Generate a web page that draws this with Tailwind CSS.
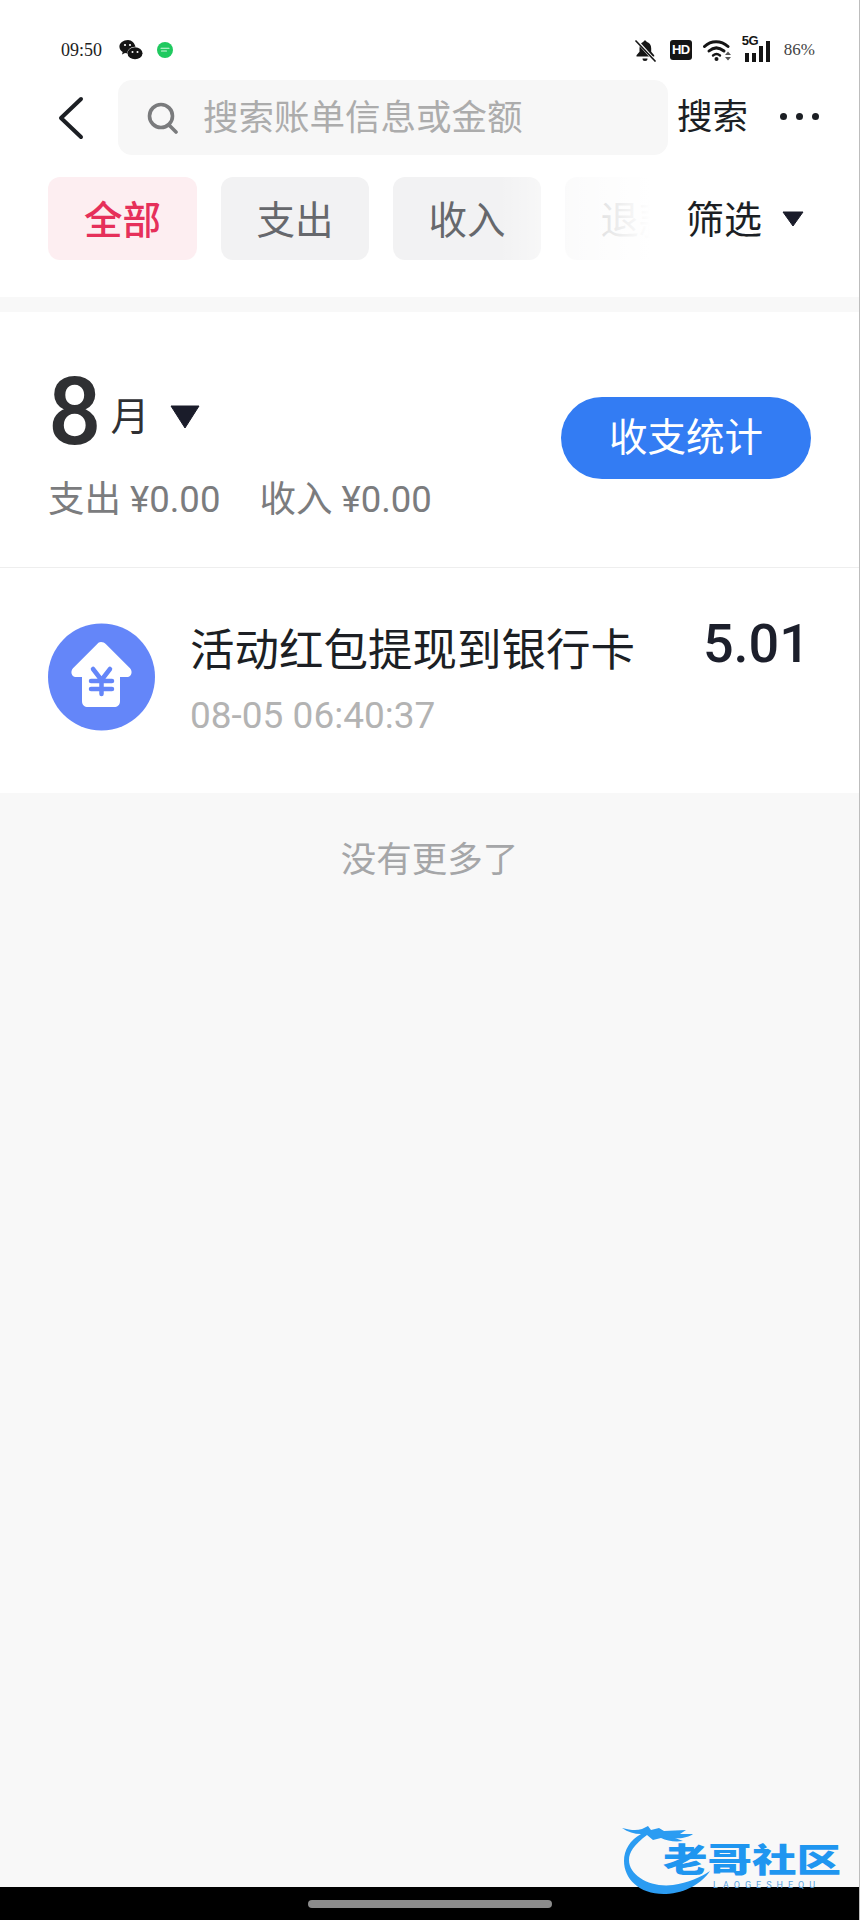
<!DOCTYPE html>
<html lang="zh">
<head>
  <meta charset="UTF-8" />
  <meta name="viewport" content="width=device-width, initial-scale=1.0" />
  <script src="https://cdn.jsdelivr.net/npm/@tailwindcss/browser@4"></script>
  <title>账单</title>
</head>
<body class="bg-white font-['Roboto','Noto_Sans_CJK_SC',sans-serif]">
  <div class="relative w-[860px] h-[1920px] flex flex-col bg-[#f8f8f8] overflow-hidden border-r border-[#bdbdbd]">

    <!-- Header -->
    <div class="bg-white h-[297px] shrink-0">
      <!-- Status bar -->
      <div class="h-[80px] flex items-center justify-between pl-[61px] pr-[44px] pt-[20px]">
        <div class="flex items-center">
          <span class="font-['Liberation_Serif',serif] text-[18px] text-[#222]">09:50</span>
          <svg class="ml-[17px]" width="24" height="20" viewBox="0 0 24 20" fill="#151515">
            <path d="M9 0C4.200 0 0.400 3 0.400 6.700c0 2.200 1.300 4 3.300 5.200L3 14.400l3-1.500c.8.200 1.600.3 2.400.3 0-3.400 3.200-6.400 7.500-6.400h.6C15.700 3 12.700 0 9 0z"/>
            <ellipse cx="16" cy="13.300" rx="7.500" ry="6"/>
            <circle cx="6" cy="5" r="1.100" fill="#fff"/><circle cx="11" cy="5" r="1.100" fill="#fff"/>
            <circle cx="13.500" cy="12" r="1" fill="#fff"/><circle cx="18.500" cy="12" r="1" fill="#fff"/>
          </svg>
          <svg class="ml-[14px]" width="16" height="16" viewBox="0 0 16 16">
            <circle cx="8" cy="8" r="8" fill="#1fc95f"/>
            <path d="M4 6.300h8M4.500 9h5" stroke="#d6f7e2" stroke-width="1.100" stroke-linecap="round"/>
          </svg>
        </div>
        <div class="flex items-center">
          <!-- muted bell -->
          <svg width="24" height="24" viewBox="0 0 24 24" fill="#151515">
            <path d="M11 2.500c.8 0 1.500.6 1.500 1.300 3 .8 4.700 3.300 4.700 6.400v3.500l3 3.600v1.200H2.500v-1.200l3-3.600v-3.500c0-3.100 1.500-5.600 4-6.400 0-.7.700-1.300 1.500-1.300z"/>
            <path d="M8.500 20.500h5a2.500 2.500 0 0 1-5 0z"/>
            <path d="M2 2l19 21" stroke="#fff" stroke-width="3"/>
            <path d="M1.500 2.500l20 21" stroke="#151515" stroke-width="1.600"/>
          </svg>
          <div class="ml-[12px] w-[22px] h-[20px] rounded-[3px] bg-[#151515] text-white text-[13px] leading-[20px] font-bold text-center font-['Liberation_Sans',sans-serif] tracking-[-0.5px]">HD</div>
          <svg class="ml-[11px]" width="30" height="22" viewBox="0 0 30 22" fill="none">
            <path d="M1.500 7.500C8 1 18 1 25 7.500" stroke="#151515" stroke-width="3" stroke-linecap="round"/>
            <path d="M6 12c4.500-4 10-4 15 0" stroke="#151515" stroke-width="3" stroke-linecap="round"/>
            <path d="M10 16.500c2.500-2 4.500-2 7 0" stroke="#151515" stroke-width="2.400" stroke-linecap="round"/>
            <circle cx="13.500" cy="20" r="2" fill="#151515"/>
            <path d="M25 12.500l3 3.500h-6zM25 21.500l3-3.500h-6z" fill="#555"/>
          </svg>
          <div class="ml-[9px] relative w-[33px] h-[24px]">
            <span class="absolute left-0 top-[-4px] text-[13px] font-bold leading-[14px] text-[#151515] font-['Liberation_Sans',sans-serif] tracking-[-0.5px]">5G</span>
            <div class="absolute left-[3px] bottom-0 flex items-end gap-[3px]">
              <div class="w-[4px] h-[9px] bg-[#151515]"></div>
              <div class="w-[4px] h-[9px] bg-[#151515]"></div>
              <div class="w-[4px] h-[16px] bg-[#151515]"></div>
              <div class="w-[4px] h-[21px] bg-[#151515]"></div>
            </div>
          </div>
          <span class="ml-[9px] text-[17px] text-[#444] font-['Liberation_Serif',serif]">86%</span>
        </div>
      </div>

      <!-- Search row -->
      <div class="h-[75px] flex items-center">
        <svg class="ml-[56px] shrink-0" width="30" height="46" viewBox="0 0 30 46" fill="none">
          <path d="M25 4L5 23l20 19" stroke="#1c1f24" stroke-width="4" stroke-linecap="round" stroke-linejoin="round"/>
        </svg>
        <div class="ml-[32px] w-[550px] h-[75px] shrink-0 rounded-[14px] bg-[#f7f7f7] flex items-center pl-[28px]">
          <svg width="32" height="32" viewBox="0 0 32 32" fill="none">
            <circle cx="15" cy="14" r="11.500" stroke="#7a7b7d" stroke-width="3.600"/>
            <path d="M24 24l6 6" stroke="#7a7b7d" stroke-width="3.600" stroke-linecap="round"/>
          </svg>
          <span class="ml-[25px] pt-[2px] text-[35.500px] text-[#acacac]">搜索账单信息或金额</span>
        </div>
        <span class="ml-[9px] text-[35.500px] text-[#1c1f24]">搜索</span>
        <div class="ml-[32px] flex gap-[9px] mb-[2px]">
          <div class="w-[7px] h-[7px] rounded-full bg-[#1c1f24]"></div>
          <div class="w-[7px] h-[7px] rounded-full bg-[#1c1f24]"></div>
          <div class="w-[7px] h-[7px] rounded-full bg-[#1c1f24]"></div>
        </div>
      </div>

      <!-- Filter chips -->
      <div class="relative mt-[22px] h-[83px] flex items-center pl-[48px] gap-[24px] overflow-hidden">
        <div class="w-[149px] h-[83px] pt-[5px] shrink-0 rounded-[12px] bg-[#fdeef1] text-[#e6305a] text-[38.500px] font-medium flex items-center justify-center">全部</div>
        <div class="w-[148px] h-[83px] pt-[5px] shrink-0 rounded-[12px] bg-[#f2f2f3] text-[#66686c] text-[38.500px] flex items-center justify-center">支出</div>
        <div class="w-[148px] h-[83px] pt-[5px] shrink-0 rounded-[12px] bg-[#f2f2f3] text-[#66686c] text-[38.500px] flex items-center justify-center">收入</div>
        <div class="w-[148px] h-[83px] pt-[5px] shrink-0 rounded-[12px] bg-[#f2f2f3] text-[#66686c] text-[38.500px] flex items-center justify-center">退款</div>
        <!-- fade over the chips, then the filter button -->
        <div class="absolute right-0 top-0 h-full w-[360px] bg-gradient-to-r from-white/0 via-white/70 via-[20%] to-white to-[42%]"></div>
        <div class="absolute right-[55px] top-0 h-full flex items-center">
          <span class="pt-[4px] text-[38px] text-[#1c1f24] mr-[20px]">筛选</span>
          <svg width="22" height="16" viewBox="0 0 22 16"><path d="M1 1h20L11 15z" fill="#1a1c2a" stroke="#1a1c2a" stroke-linejoin="round"/></svg>
        </div>
      </div>
    </div>

    <!-- Gray band -->
    <div class="h-[15px] shrink-0"></div>

    <!-- Month summary -->
    <div class="bg-white h-[256px] shrink-0 flex items-start justify-between border-b border-[#eeeeee] pl-[48px] pr-[48px]">
      <div>
        <div class="h-[165px] flex items-end pb-[10px]">
          <span class="text-[94px] leading-[110px] font-medium text-[#2f3033]">8</span>
          <span class="ml-[9px] text-[39px] leading-[52px] text-[#2f3033] mb-[24px]">月</span>
          <svg class="ml-[21px] mb-[38px]" width="30" height="24" viewBox="0 0 30 24"><path d="M1 1h28L15 23z" fill="#1a1c2a" stroke="#1a1c2a" stroke-linejoin="round"/></svg>
        </div>
        <div class="flex gap-[39px] text-[36.500px] leading-[46px] text-[#7b7c7e]">
          <span>支出 ¥0.00</span>
          <span>收入 ¥0.00</span>
        </div>
      </div>
      <div class="mt-[85px] w-[250px] h-[82px] rounded-full bg-[#337cf3] text-white text-[38.500px] flex items-center justify-center">收支统计</div>
    </div>

    <!-- Transaction -->
    <div class="bg-white h-[225px] shrink-0 flex items-start pl-[48px] pr-[49px]">
      <svg class="mt-[55px] shrink-0" width="107" height="108" viewBox="0 0 107 108">
        <circle cx="53.500" cy="54" r="53.500" fill="#6486f9"/>
        <path d="M53 19c2 0 3.500.8 5 2.300l24 24c3 3 1.500 8.700-2.500 8.700H72v24c0 4-2.500 6-6 6H40c-3.500 0-6-2-6-6V54h-6.500c-4 0-5.500-5.700-2.500-8.700l24-24c1.500-1.500 2-2.300 4-2.300z" fill="#fff"/>
        <path d="M45 46l8.500 11L62 46M43 58h21M43 66h21M53.500 57v14" fill="none" stroke="#6486f9" stroke-width="4.500" stroke-linecap="round" stroke-linejoin="round"/>
      </svg>
      <div class="ml-[35px] flex-1 pt-[52px]">
        <div class="text-[44.500px] leading-[62px] text-[#1c1f24]">活动红包提现到银行卡</div>
        <div class="mt-[11px] text-[37px] leading-[46px] text-[#b3b3b3]">08-05 06:40:37</div>
      </div>
      <div class="mt-[44px] text-[54px] leading-[64px] font-medium text-[#1c1f2b]">5.01</div>
    </div>

    <!-- End of list -->
    <div class="flex-1 text-center pt-[41px] text-[35.500px] leading-[52px] text-[#a5a6a8]">没有更多了</div>

    <!-- Navigation bar -->
    <div class="h-[33px] shrink-0 bg-black flex items-center justify-center -mr-px">
      <div class="w-[244px] h-[8px] rounded-full bg-[#8c8c8c]"></div>
    </div>

    <!-- Watermark -->
    <div class="absolute left-[620px] top-[1825px] w-[226px] h-[72px]">
      <svg class="absolute left-0 top-0" width="100" height="72" viewBox="0 0 100 72" fill="none">
        <path d="M2 3c8 2 14 3 20 1l6-3 3 4 8-2 5 3 22-1-6 4 13 0c-4 3-12 5-18 4l8 3c-8 1-16 0-22-3l-8 2-6-5C14 20 9 27 9 35c0 16 22 28 44 25 15-2 28-8 37-14-8 12-24 22-44 23C20 70 4 54 4 36 4 25 10 15 21 9 14 9 8 7 2 3z" fill="#2b9cf2"/>
      </svg>
      <div class="absolute left-[43px] top-[20px] text-[44.500px] leading-[32px] font-black text-[#1f96f0] whitespace-nowrap scale-y-[0.75]">老哥社区</div>
      <div class="absolute left-[93px] top-[56px] text-[9px] leading-[8px] text-[#5aa3df] tracking-[5px] whitespace-nowrap">LAOGESHEQU</div>
    </div>
  </div>
</body>
</html>
